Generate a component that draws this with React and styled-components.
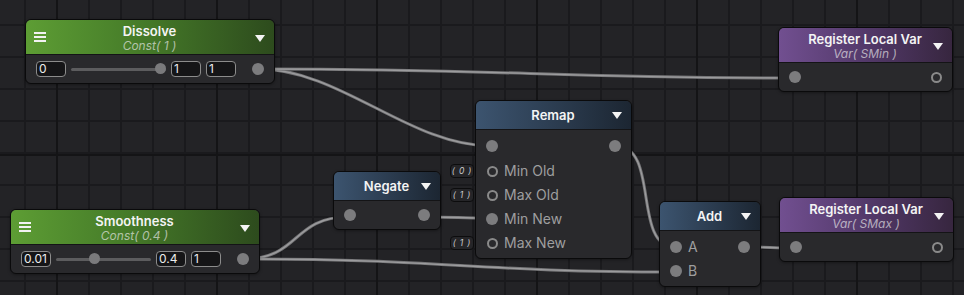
import React from "react";
import styled, { createGlobalStyle, css } from "styled-components";

const Global = createGlobalStyle`
  html, body { margin: 0; padding: 0; background: #232326; overflow: hidden; }
  * { box-sizing: border-box; }
`;

const Canvas = styled.div`
  position: relative;
  width: 964px;
  height: 295px;
  overflow: hidden;
  font-family: "Inter", "Roboto", "Noto Sans", sans-serif;
  background-color: #232326;
  background-image:
    linear-gradient(90deg, #141416 0 2px, transparent 2px),
    linear-gradient(0deg, transparent calc(100% - 2px), #141416 calc(100% - 2px)),
    linear-gradient(90deg, #1a1a1d 0 2px, transparent 2px),
    linear-gradient(180deg, #1a1a1d 0 2px, transparent 2px);
  background-size: 160px 160px, 160px 160px, 32px 32px, 32px 32px;
  background-position: 56px 0, 0 -6px, 24px 0, 0 24px;
`;

const Wires = styled.svg`
  position: absolute;
  inset: 0;
  width: 964px;
  height: 295px;
`;

const Node = styled.div`
  position: absolute;
  left: ${(p) => p.$x}px;
  top: ${(p) => p.$y}px;
  width: ${(p) => p.$w}px;
  border: 1px solid #0a0a0b;
  border-radius: 6px;
  background: #29292c;
  box-shadow: 0 1px 3px rgba(0, 0, 0, 0.35);
`;

const tones = {
  green: css`background: linear-gradient(90deg, #5d9d34 0%, #467c29 45%, #2d4b1d 100%);`,
  blue: css`background: linear-gradient(90deg, #3c546f 0%, #2c3d51 50%, #1c2632 100%);`,
  purple: css`background: linear-gradient(90deg, #714f90 0%, #53396a 50%, #37263f 100%);`,
};

const Header = styled.div`
  height: ${(p) => (p.$tall ? 35 : 29)}px;
  border-radius: 5px 5px 0 0;
  border-bottom: 1px solid #141416;
  display: grid;
  grid-template-columns: 1fr auto 1fr;
  align-items: center;
  padding: 0 9px 0 8px;
  ${(p) => tones[p.$tone]}
`;

const Menu = styled.div`
  width: 12px;
  display: flex;
  flex-direction: column;
  gap: 2px;
  span {
    display: block;
    height: 2px;
    background: #f2f2f2;
  }
`;

const TitleBlock = styled.div`
  display: flex;
  flex-direction: column;
  align-items: center;
  padding-top: ${(p) => (p.$tall ? 1 : 0)}px;
`;

const Title = styled.div`
  color: #f4f4f4;
  font-size: 13px;
  font-weight: 600;
  line-height: 15px;
  white-space: nowrap;
`;

const Subtitle = styled.div`
  color: rgba(236, 236, 236, 0.66);
  font-size: 12px;
  font-style: italic;
  line-height: 13px;
  white-space: nowrap;
`;

const Caret = styled.div`
  justify-self: end;
  width: 0;
  height: 0;
  border-left: 5px solid transparent;
  border-right: 5px solid transparent;
  border-top: 7px solid #f4f4f4;
  margin-top: ${(p) => (p.$tall ? 2 : 0)}px;
`;

const Body = styled.div`
  padding: ${(p) => (p.$compact ? "2px 10px 2px" : "3px 10px 3px")};
`;

const Row = styled.div`
  position: relative;
  display: flex;
  align-items: center;
  height: ${(p) => p.$h ?? 24}px;
  gap: ${(p) => p.$gap ?? 6}px;
`;

const Port = styled.div`
  flex: none;
  width: 12px;
  height: 12px;
  border-radius: 50%;
  ${(p) =>
    p.$hollow
      ? css`border: 2px solid #8a8a8a; width: 11px; height: 11px; margin: 0 0.5px;`
      : css`background: #7c7c7e;`}
`;

const Label = styled.span`
  color: #9e9e9f;
  font-size: 14px;
  line-height: 16px;
`;

const Spacer = styled.div`
  flex: 1;
`;

const ValueBox = styled.div`
  flex: none;
  width: 30px;
  height: 16px;
  border: 1px solid #8c8c8c;
  border-radius: 4px;
  background: #151517;
  color: #ececec;
  font-size: 12px;
  line-height: 14px;
  padding-left: 2px;
  overflow: hidden;
`;

const Slider = styled.div`
  flex: none;
  position: relative;
  width: 95px;
  height: 12px;
  display: flex;
  align-items: center;
`;

const Track = styled.div`
  width: 100%;
  height: 3px;
  border-radius: 2px;
  background: #5c5c5e;
`;

const Thumb = styled.div`
  position: absolute;
  top: 0;
  width: 11px;
  height: 11px;
  border-radius: 50%;
  background: #7a7a7c;
`;

const DefaultTag = styled.div`
  position: absolute;
  right: calc(100% + 12px);
  top: 5px;
  width: 24px;
  height: 14px;
  border: 1px solid #0c0c0d;
  border-radius: 4px;
  background: #252528;
  color: #cdcdcd;
  font-size: 8.5px;
  font-style: italic;
  line-height: 12px;
  text-align: center;
  letter-spacing: 0.8px;
  white-space: nowrap;
`;

function NodeHeader({ tone, title, subtitle, menu }) {
  const tall = !!subtitle;
  return (
    <Header $tone={tone} $tall={tall}>
      <div>
        {menu && (
          <Menu>
            <span />
            <span />
            <span />
          </Menu>
        )}
      </div>
      <TitleBlock $tall={tall}>
        <Title>{title}</Title>
        {subtitle && <Subtitle>{subtitle}</Subtitle>}
      </TitleBlock>
      <Caret $tall={tall} />
    </Header>
  );
}

function ConstNode({ x, y, title, subtitle, min, max, value, step }) {
  const pct = (parseFloat(value) - parseFloat(min)) / (parseFloat(max) - parseFloat(min));
  return (
    <Node $x={x} $y={y} $w={250}>
      <NodeHeader tone="green" title={title} subtitle={subtitle} menu />
      <Body $compact>
        <Row $gap={5}>
          <ValueBox>{min}</ValueBox>
          <Slider>
            <Track />
            <Thumb style={{ left: `${pct * 84}px` }} />
          </Slider>
          <ValueBox>{value}</ValueBox>
          <ValueBox>{step}</ValueBox>
          <Spacer />
          <Port />
        </Row>
      </Body>
    </Node>
  );
}

const wires = [
  "M259,69 C340,69 410,146 491,146",
  "M259,69 C520,69 540,78 795,78",
  "M616,146 C660,146 632,247 675,247",
  "M244,259 C300,259 292,217 348,217",
  "M244,259 C450,259 470,272 675,272",
  "M425,217 C458,217 458,218 491,218",
  "M745,247 C770,247 770,248 795,248",
];

export default function App() {
  return (
    <Canvas>
      <Global />
      <Wires viewBox="0 0 964 295">
        {wires.map((d, i) => (
          <g key={i}>
            <path d={d} fill="none" stroke="#767678" strokeWidth="3" />
            <path d={d} fill="none" stroke="#9c9c9e" strokeWidth="1.3" />
          </g>
        ))}
      </Wires>

      <ConstNode x={25} y={19} title="Dissolve" subtitle="Const( 1 )" min="0" max="1" value="1" step="1" />
      <ConstNode x={10} y={209} title="Smoothness" subtitle="Const( 0.4 )" min="0.01" max="1" value="0.4" step="1" />

      <Node $x={333} $y={171} $w={108}>
        <NodeHeader tone="blue" title="Negate" />
        <Body $compact>
          <Row>
            <Port />
            <Spacer />
            <Port />
          </Row>
        </Body>
      </Node>

      <Node $x={475} $y={100} $w={157}>
        <NodeHeader tone="blue" title="Remap" />
        <Body>
          <Row $h={26}>
            <Port />
            <Spacer />
            <Port />
          </Row>
          <Row>
            <DefaultTag>( 0 )</DefaultTag>
            <Port $hollow />
            <Label>Min Old</Label>
          </Row>
          <Row>
            <DefaultTag>( 1 )</DefaultTag>
            <Port $hollow />
            <Label>Max Old</Label>
          </Row>
          <Row>
            <Port />
            <Label>Min New</Label>
          </Row>
          <Row>
            <DefaultTag>( 1 )</DefaultTag>
            <Port $hollow />
            <Label>Max New</Label>
          </Row>
        </Body>
      </Node>

      <Node $x={659} $y={201} $w={102}>
        <NodeHeader tone="blue" title="Add" />
        <Body>
          <Row $h={25}>
            <Port />
            <Label>A</Label>
            <Spacer />
            <Port />
          </Row>
          <Row>
            <Port />
            <Label>B</Label>
          </Row>
        </Body>
      </Node>

      <Node $x={778} $y={27} $w={175}>
        <NodeHeader tone="purple" title="Register Local Var" subtitle="Var( SMin )" />
        <Body $compact>
          <Row>
            <Port />
            <Spacer />
            <Port $hollow />
          </Row>
        </Body>
      </Node>

      <Node $x={779} $y={197} $w={175}>
        <NodeHeader tone="purple" title="Register Local Var" subtitle="Var( SMax )" />
        <Body $compact>
          <Row>
            <Port />
            <Spacer />
            <Port $hollow />
          </Row>
        </Body>
      </Node>
    </Canvas>
  );
}
